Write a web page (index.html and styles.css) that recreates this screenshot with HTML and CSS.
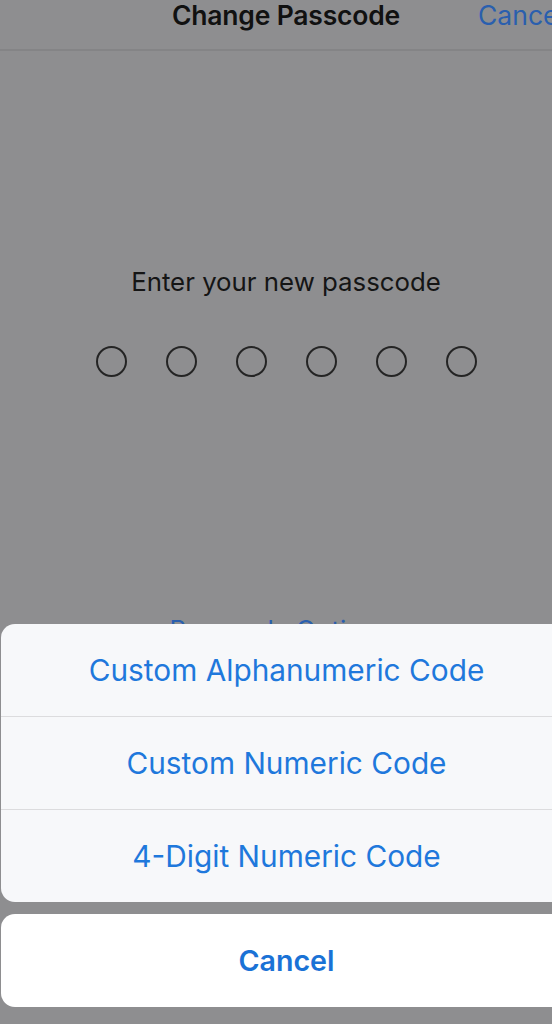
FILE: index.html
```html
<!DOCTYPE html>
<html lang="en">
<head>
    <meta charset="UTF-8">
    <meta name="viewport" content="width=device-width, initial-scale=1.0">
    <title>Change Passcode</title>
    <link rel="stylesheet" href="styles.css">
</head>
<body>
    <div class="screen">
        <div class="navbar">
            <span class="nav-title">Change Passcode</span>
            <span class="nav-cancel">Cancel</span>
        </div>

        <div class="entry">
            <p class="prompt">Enter your new passcode</p>
            <div class="dots">
                <span class="dot"></span>
                <span class="dot"></span>
                <span class="dot"></span>
                <span class="dot"></span>
                <span class="dot"></span>
                <span class="dot"></span>
            </div>
        </div>

        <div class="options-link">Passcode Options</div>

        <!-- action sheet over the dimmed screen -->
        <div class="sheet">
            <div class="sheet-group">
                <div class="sheet-row">Custom Alphanumeric Code</div>
                <div class="sheet-row">Custom Numeric Code</div>
                <div class="sheet-row">4-Digit Numeric Code</div>
            </div>
            <div class="sheet-cancel">Cancel</div>
        </div>
    </div>
</body>
</html>
```

FILE: styles.css
```css
body {
    margin: 0;
    overflow: hidden;
    background: #8e8e90;
    font-family: Inter, "Liberation Sans", Arial, sans-serif;
}
.screen {
    position: relative;
    width: 572px;
    height: 1024px;
    background: #8e8e90;
}
.navbar {
    height: 49px;
    border-bottom: 2px solid #848486;
    display: flex;
    justify-content: center;
    position: relative;
}
.nav-title {
    font-size: 26.5px;
    font-weight: 600;
    color: #111;
    line-height: 30px;
    letter-spacing: -0.2px;
}
.nav-cancel {
    position: absolute;
    left: 478px;
    top: 0;
    font-size: 26.5px;
    line-height: 30px;
    color: #2a5fae;
}
.entry {
    padding-top: 213px;
    text-align: center;
}
.prompt {
    margin: 0;
    font-size: 25.8px;
    line-height: 36px;
    color: #151515;
}
.dots {
    display: flex;
    justify-content: center;
    gap: 39px;
    margin-top: 46px;
}
.dot {
    width: 27px;
    height: 27px;
    border: 2px solid #242424;
    border-radius: 50%;
}
.options-link {
    margin-top: 237px;
    text-align: center;
    font-size: 25.8px;
    color: #2a5fae;
    padding-right: 12px;
}
.sheet {
    position: absolute;
    left: 1px;
    right: 0;
    top: 624px;
}
.sheet-group {
    background: #f7f8fa;
    border-radius: 14px;
    overflow: hidden;
}
.sheet-row {
    height: 92px;
    display: flex;
    align-items: center;
    justify-content: center;
    font-size: 29.8px;
    color: #1f78dc;
    border-top: 1px solid #dcdcde;
}
.sheet-row:first-child { border-top: none; }
.sheet-cancel {
    margin-top: 12px;
    height: 93px;
    background: #fff;
    border-radius: 14px;
    display: flex;
    align-items: center;
    justify-content: center;
    font-size: 28.6px;
    font-weight: 600;
    color: #1a72d6;
}
```
